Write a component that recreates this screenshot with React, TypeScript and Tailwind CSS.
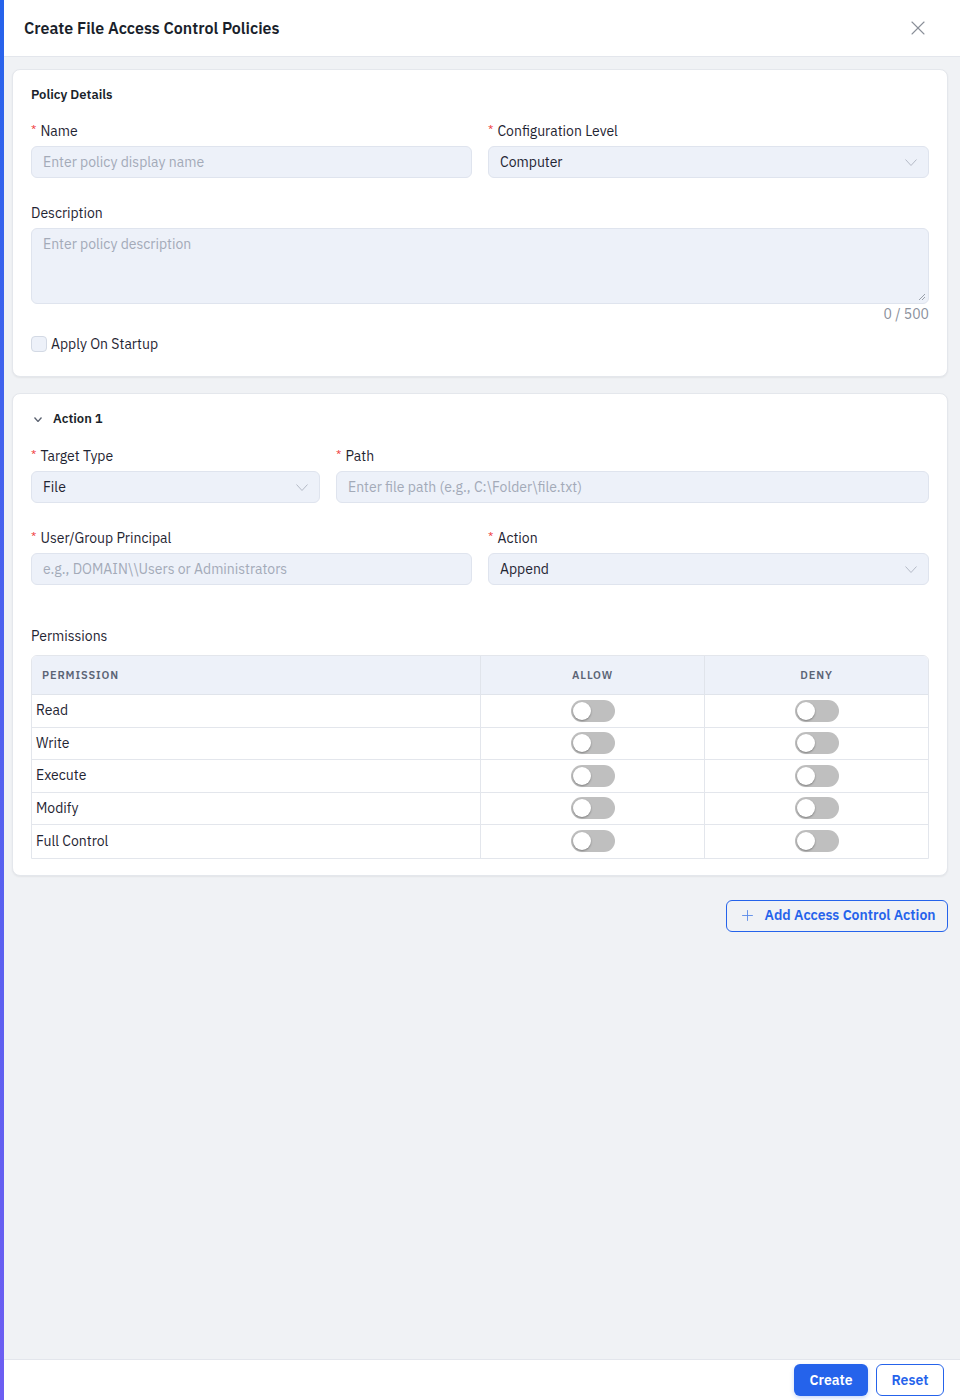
import { Plus, X } from "lucide-react";

const font = { fontFamily: '"IBM Plex Sans", Roboto, "Noto Sans", sans-serif' };

function Chevron({ w, h, color, stroke }: { w: number; h: number; color: string; stroke: number }) {
    return (
        <svg width={w} height={h} viewBox={`0 0 ${w} ${h}`} fill="none">
            <path d={`M0.5 0.5 L${w / 2} ${h - 0.5} L${w - 0.5} 0.5`} stroke={color} strokeWidth={stroke} />
        </svg>
    );
}

function Label({ text, required }: { text: string; required?: boolean }) {
    return (
        <div className="h-[22px] flex items-center text-[14px] text-[#1f2533] mb-[4px]">
            {required && <span className="text-[#ef4444] text-[12px] mr-[4px] -mt-[4px]">*</span>}
            {text}
        </div>
    );
}

function TextInput({ placeholder }: { placeholder: string }) {
    return (
        <div className="h-[32px] rounded-[6px] border border-[#dfe4ee] bg-[#edf1f9] px-[11px] flex items-center text-[14px] text-[#a3aab8]">
            {placeholder}
        </div>
    );
}

function Select({ value }: { value: string }) {
    return (
        <div className="h-[32px] rounded-[6px] border border-[#dfe4ee] bg-[#edf1f9] pl-[11px] pr-[11px] flex items-center justify-between text-[14px] text-[#1f2533]">
            <span>{value}</span>
            <Chevron w={12} h={7} color="#b4bac6" stroke={1} />
        </div>
    );
}

function Toggle() {
    return (
        <div className="w-[44px] h-[22px] rounded-full bg-[#bfbfbf] p-[2px] flex items-center">
            <div className="w-[18px] h-[18px] rounded-full bg-white shadow-[0_1px_2px_rgba(0,0,0,0.35)]" />
        </div>
    );
}

const permissions = ["Read", "Write", "Execute", "Modify", "Full Control"];

export default function App() {
    return (
        <div style={font} className="relative w-[960px] h-[1400px] bg-[#f0f2f5] flex flex-col overflow-hidden">
            <div className="absolute left-0 top-0 bottom-0 w-[4px] bg-gradient-to-b from-[#2563eb] to-[#6d5ef2]" />

            <header className="h-[57px] shrink-0 bg-white border-b border-[#e3e6ec] flex items-center justify-between pl-[24px] pr-[30px]">
                <h1 className="text-[16px] font-semibold text-[#1a1f2b]">Create File Access Control Policies</h1>
                <X size={24} strokeWidth={1.1} className="text-[#8a8f99]" />
            </header>

            <main className="flex-1 pl-[12px] pr-[12px] pt-[12px] flex flex-col gap-[16px]">
                <section className="bg-white rounded-[8px] border border-[#e4e7ec] shadow-[0_1px_2px_rgba(0,0,0,0.06)] px-[18px] pt-[16px] pb-[22px]">
                    <h2 className="text-[13px] font-semibold text-[#1a1f2b] h-[18px] flex items-center mb-[16px]">Policy Details</h2>
                    <div className="grid grid-cols-2 gap-x-[16px]">
                        <div>
                            <Label text="Name" required />
                            <TextInput placeholder="Enter policy display name" />
                        </div>
                        <div>
                            <Label text="Configuration Level" required />
                            <Select value="Computer" />
                        </div>
                    </div>
                    <div className="mt-[24px]">
                        <Label text="Description" />
                        <div className="relative h-[76px] rounded-[6px] border border-[#dfe4ee] bg-[#edf1f9] px-[11px] pt-[4px] text-[14px] leading-[22px] text-[#a3aab8]">
                            Enter policy description
                            <svg className="absolute right-[2px] bottom-[2px]" width="8" height="8" viewBox="0 0 8 8">
                                <path d="M7 1 L1 7 M7 4 L4 7" stroke="#9aa0aa" strokeWidth="1" />
                            </svg>
                        </div>
                        <div className="text-right text-[14px] text-[#8a909c] h-[20px] leading-[20px]">0 / 500</div>
                    </div>
                    <label className="flex items-center gap-[4px] mt-[10px] h-[20px] text-[14px] text-[#1f2533]">
                        <span className="w-[16px] h-[16px] rounded-[4px] border border-[#d3d9e4] bg-[#edf1f9]" />
                        Apply On Startup
                    </label>
                </section>

                <section className="bg-white rounded-[8px] border border-[#e4e7ec] shadow-[0_1px_2px_rgba(0,0,0,0.06)] px-[18px] pt-[15px] pb-[16px]">
                    <div className="flex items-center h-[20px] mb-[16px]">
                        <span className="ml-[3px] mr-[11px] flex items-center">
                            <Chevron w={8} h={5} color="#5b6270" stroke={1.3} />
                        </span>
                        <span className="text-[13px] font-semibold text-[#1a1f2b]">Action 1</span>
                    </div>
                    <div className="grid grid-cols-[289px_1fr] gap-x-[16px]">
                        <div>
                            <Label text="Target Type" required />
                            <Select value="File" />
                        </div>
                        <div>
                            <Label text="Path" required />
                            <TextInput placeholder="Enter file path (e.g., C:\Folder\file.txt)" />
                        </div>
                    </div>
                    <div className="grid grid-cols-2 gap-x-[16px] mt-[24px]">
                        <div>
                            <Label text="User/Group Principal" required />
                            <TextInput placeholder="e.g., DOMAIN\\Users or Administrators" />
                        </div>
                        <div>
                            <Label text="Action" required />
                            <Select value="Append" />
                        </div>
                    </div>

                    <div className="mt-[40px] text-[14px] text-[#1f2533] h-[22px] flex items-center mb-[8px]">Permissions</div>
                    <div className="border border-[#e3e6ec] rounded-t-[6px] overflow-hidden">
                        <div className="grid grid-cols-[449px_224px_1fr] bg-[#edf1f9] h-[39px] text-[11px] font-semibold tracking-[0.08em] text-[#5b6475] border-b border-[#e0e4eb]">
                            <div className="flex items-center pl-[10px] border-r border-[#e0e4eb]">PERMISSION</div>
                            <div className="flex items-center justify-center border-r border-[#e0e4eb]">ALLOW</div>
                            <div className="flex items-center justify-center">DENY</div>
                        </div>
                        {permissions.map((p, i) => (
                            <div
                                key={p}
                                className={`grid grid-cols-[449px_224px_1fr] h-[32.5px] text-[14px] text-[#1f2533] ${i < permissions.length - 1 ? "border-b border-[#e3e6ec]" : ""}`}
                            >
                                <div className="flex items-center pl-[4px] border-r border-[#e3e6ec]">{p}</div>
                                <div className="flex items-center justify-center border-r border-[#e3e6ec]">
                                    <Toggle />
                                </div>
                                <div className="flex items-center justify-center">
                                    <Toggle />
                                </div>
                            </div>
                        ))}
                    </div>
                </section>

                <div className="flex justify-end mt-[8px]">
                    <button className="h-[32px] w-[222px] rounded-[6px] border border-[#2563eb] bg-transparent flex items-center justify-center gap-[9px] text-[14px] font-semibold text-[#2563eb]">
                        <Plus size={17} strokeWidth={1.3} className="text-[#5b8ce8]" />
                        Add Access Control Action
                    </button>
                </div>
            </main>

            <footer className="h-[41px] shrink-0 bg-white border-t border-[#e3e6ec] flex items-center justify-end gap-[8px] pr-[16px]">
                <button className="h-[32px] w-[74px] rounded-[6px] bg-[#2563eb] text-white text-[14px] font-semibold shadow-[0_2px_4px_rgba(37,99,235,0.25)]">Create</button>
                <button className="h-[32px] w-[68px] rounded-[6px] border border-[#2563eb] bg-white text-[#2563eb] text-[14px] font-semibold">Reset</button>
            </footer>
        </div>
    );
}
